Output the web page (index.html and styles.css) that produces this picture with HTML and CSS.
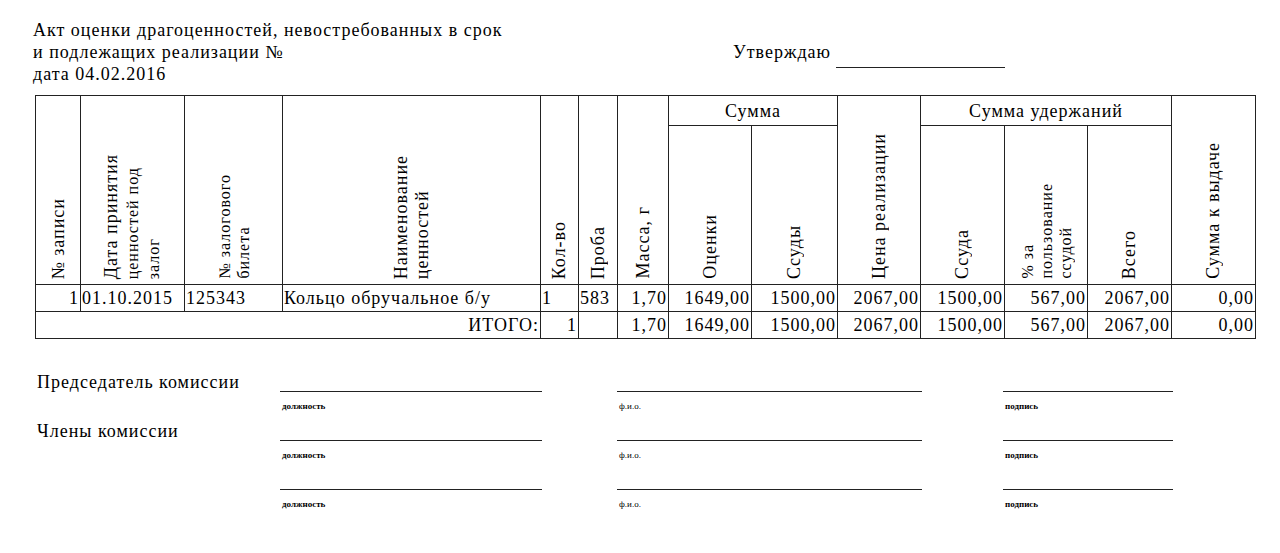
FILE: index.html
```html
<!DOCTYPE html>
<html lang="ru">
<head>
<meta charset="utf-8">
<title>Акт оценки драгоценностей</title>
<link rel="stylesheet" href="styles.css">
</head>
<body>
<div class="page">
  <header class="head">
    <div class="head-line">Акт оценки драгоценностей, невостребованных в срок</div>
    <div class="head-line head-row">
      <span class="head-left">и подлежащих реализации №</span>
      <span class="approve">Утверждаю</span>
      <span class="approve-line"></span>
    </div>
    <div class="head-line">дата 04.02.2016</div>
  </header>

  <table class="act">
    <colgroup>
      <col class="c45"><col class="c104"><col class="c98"><col class="c258"><col class="c38"><col class="c39"><col class="c51"><col class="c83"><col class="c86"><col class="c83"><col class="c84"><col class="c83"><col class="c84"><col class="c84">
    </colgroup>
    <thead>
      <tr class="hr1">
        <th rowspan="2" class="rot"><span class="v">№ записи</span></th>
        <th rowspan="2" class="rot"><span class="v">Дата принятия<br><span class="sm">ценностей под<br>залог</span></span></th>
        <th rowspan="2" class="rot"><span class="v sm">№ залогового<br>билета</span></th>
        <th rowspan="2" class="rot"><span class="v">Наименование<br>ценностей</span></th>
        <th rowspan="2" class="rot"><span class="v">Кол-во</span></th>
        <th rowspan="2" class="rot"><span class="v">Проба</span></th>
        <th rowspan="2" class="rot"><span class="v">Масса, г</span></th>
        <th colspan="2" class="grp">Сумма</th>
        <th rowspan="2" class="rot"><span class="v">Цена реализации</span></th>
        <th colspan="3" class="grp">Сумма удержаний</th>
        <th rowspan="2" class="rot"><span class="v">Сумма к выдаче</span></th>
      </tr>
      <tr class="hr2">
        <th class="rot"><span class="v">Оценки</span></th>
        <th class="rot"><span class="v">Ссуды</span></th>
        <th class="rot"><span class="v">Ссуда</span></th>
        <th class="rot"><span class="v sm">% за<br>пользование<br>ссудой</span></th>
        <th class="rot"><span class="v">Всего</span></th>
      </tr>
    </thead>
    <tbody>
      <tr class="dr">
        <td class="r">1</td>
        <td class="l">01.10.2015</td>
        <td class="l">125343</td>
        <td class="l">Кольцо обручальное б/у</td>
        <td class="l">1</td>
        <td class="l">583</td>
        <td class="r">1,70</td>
        <td class="r">1649,00</td>
        <td class="r">1500,00</td>
        <td class="r">2067,00</td>
        <td class="r">1500,00</td>
        <td class="r">567,00</td>
        <td class="r">2067,00</td>
        <td class="r">0,00</td>
      </tr>
      <tr class="dr">
        <td colspan="4" class="r">ИТОГО:</td>
        <td class="r">1</td>
        <td class="l"></td>
        <td class="r">1,70</td>
        <td class="r">1649,00</td>
        <td class="r">1500,00</td>
        <td class="r">2067,00</td>
        <td class="r">1500,00</td>
        <td class="r">567,00</td>
        <td class="r">2067,00</td>
        <td class="r">0,00</td>
      </tr>
    </tbody>
  </table>

  <section class="signs">
    <div class="sign-row">
      <div class="s-label">Председатель комиссии</div>
      <div class="s-line f1"></div>
      <div class="s-line f2"></div>
      <div class="s-line f3"></div>
      <div class="s-cap f1 b">должность</div>
      <div class="s-cap f2">ф.и.о.</div>
      <div class="s-cap f3 b">подпись</div>
    </div>
    <div class="sign-row">
      <div class="s-label">Члены комиссии</div>
      <div class="s-line f1"></div>
      <div class="s-line f2"></div>
      <div class="s-line f3"></div>
      <div class="s-cap f1 b">должность</div>
      <div class="s-cap f2">ф.и.о.</div>
      <div class="s-cap f3 b">подпись</div>
    </div>
    <div class="sign-row">
      <div class="s-label"></div>
      <div class="s-line f1"></div>
      <div class="s-line f2"></div>
      <div class="s-line f3"></div>
      <div class="s-cap f1 b">должность</div>
      <div class="s-cap f2">ф.и.о.</div>
      <div class="s-cap f3 b">подпись</div>
    </div>
  </section>
</div>
</body>
</html>
```

FILE: styles.css
```css
html, body {
  margin: 0;
  padding: 0;
  background: #ffffff;
}

body {
  color: #000;
  font-family: "Liberation Serif", "Times New Roman", serif;
  font-size: 18px;
  letter-spacing: 1px;
}

.page {
  padding: 19px 0 0 33px;
}

/* header */
.head-line {
  height: 22px;
  line-height: 22px;
  white-space: nowrap;
}

.head-row {
  display: flex;
}

.head-left {
  width: 700px;
}

.approve {
  width: 103px;
}

.approve-line {
  width: 169px;
  height: 26px;
  border-bottom: 1px solid #222;
  align-self: flex-start;
}

/* table */
.act {
  margin: 10px 0 0 2px;
  border-collapse: collapse;
  table-layout: fixed;
  width: 1221px;
}

.c45 { width: 45px; }
.c104 { width: 104px; }
.c98 { width: 98px; }
.c258 { width: 258px; }
.c38 { width: 38px; }
.c39 { width: 39px; }
.c51 { width: 51px; }
.c83 { width: 83px; }
.c84 { width: 84px; }
.c86 { width: 86px; }

.act th,
.act td {
  border: 1px solid #222;
  padding: 0 2px;
  font-weight: normal;
  white-space: nowrap;
  overflow: hidden;
}

.hr1 { height: 30px; }
.hr2 { height: 159px; }
.dr { height: 27px; }

.grp {
  text-align: center;
  vertical-align: middle;
  line-height: 20px;
}

.rot {
  text-align: center;
  vertical-align: bottom;
  padding-bottom: 3px;
}

.v {
  display: inline-block;
  writing-mode: vertical-rl;
  text-orientation: sideways;
  transform: rotate(180deg);
  text-align: left;
  line-height: 21px;
}

.sm {
  font-size: 16px;
  line-height: 19px;
}

.act td {
  line-height: 24px;
  vertical-align: middle;
}

.act td.r { text-align: right; padding-right: 1px; }
.act td.l { text-align: left; padding-left: 1px; }

/* signatures */
.signs {
  margin: 33px 0 0 2px;
}

.sign-row {
  display: grid;
  grid-template-columns: 245px 262px 75px 305px 81px 170px;
  grid-template-rows: 20px 29px;
}

.s-label {
  grid-row: 1;
  grid-column: 1;
  padding-left: 2px;
  line-height: 20px;
  white-space: nowrap;
}

.s-line {
  grid-row: 1;
  border-bottom: 1px solid #222;
}

.s-cap {
  grid-row: 2;
  font-size: 9px;
  line-height: 12px;
  letter-spacing: 0;
  padding-top: 8px;
  padding-left: 2px;
}

.s-cap.b { font-weight: bold; }

.f1 { grid-column: 2; }
.f2 { grid-column: 4; }
.f3 { grid-column: 6; }
```
